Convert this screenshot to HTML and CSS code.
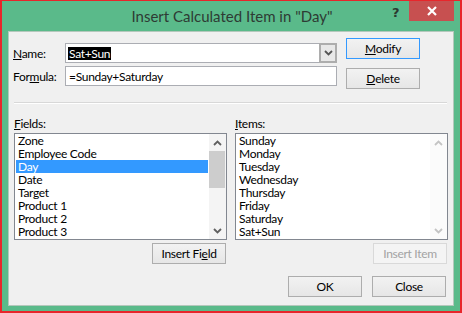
FILE: index.html
```html
<!DOCTYPE html>
<html>
<head>
<meta charset="utf-8">
<link rel="stylesheet" href="styles.css">
</head>
<body>
<div class="window">
  <div class="titlebar">
    <div class="title">Insert Calculated Item in "Day"</div>
    <div class="help">?</div>
    <div class="close"><svg width="12" height="10" viewBox="0 0 12 10"><path d="M2 1 L10 9 M10 1 L2 9" stroke="#fff" stroke-width="2.2" fill="none"/></svg></div>
  </div>
  <div class="panel">
    <div class="top">
      <div class="form">
        <div class="frow name-row">
          <div class="lbl"><u>N</u>ame:</div>
          <div class="combo">
            <div class="combo-text"><span class="hl">Sat+Sun</span></div>
            <div class="drop"><svg width="9" height="6" viewBox="0 0 9 6"><path d="M1 1 L4.5 4.5 L8 1" stroke="#555" stroke-width="1.8" fill="none"/></svg></div>
          </div>
        </div>
        <div class="frow">
          <div class="lbl">For<u>m</u>ula:</div>
          <div class="textbox">=Sunday+Saturday</div>
        </div>
      </div>
      <div class="btns">
        <div class="btn default"><u>M</u>odify</div>
        <div class="btn"><u>D</u>elete</div>
      </div>
    </div>
    <div class="sep"></div>
    <div class="lists">
      <div class="lcol">
        <div class="llabel"><u>F</u>ields:</div>
        <div class="listbox">
          <div class="items">
            <div class="item">Zone</div>
            <div class="item">Employee Code</div>
            <div class="item sel">Day</div>
            <div class="item">Date</div>
            <div class="item">Target</div>
            <div class="item">Product 1</div>
            <div class="item">Product 2</div>
            <div class="item">Product 3</div>
          </div>
          <div class="sbar">
            <div class="arr"><svg width="9" height="6" viewBox="0 0 9 6"><path d="M1 5 L4.5 1.5 L8 5" stroke="#606060" stroke-width="1.8" fill="none"/></svg></div>
            <div class="track"><div class="thumb"></div></div>
            <div class="arr"><svg width="9" height="6" viewBox="0 0 9 6"><path d="M1 1 L4.5 4.5 L8 1" stroke="#606060" stroke-width="1.8" fill="none"/></svg></div>
          </div>
        </div>
        <div class="under"><div class="btn"><span>Insert Fi<u>e</u>ld</span></div></div>
      </div>
      <div class="lcol">
        <div class="llabel"><u>I</u>tems:</div>
        <div class="listbox">
          <div class="items">
            <div class="item">Sunday</div>
            <div class="item">Monday</div>
            <div class="item">Tuesday</div>
            <div class="item">Wednesday</div>
            <div class="item">Thursday</div>
            <div class="item">Friday</div>
            <div class="item">Saturday</div>
            <div class="item">Sat+Sun</div>
          </div>
          <div class="sbar off">
            <div class="arr"><svg width="9" height="6" viewBox="0 0 9 6"><path d="M1 5 L4.5 1.5 L8 5" stroke="#C4C4C4" stroke-width="1.8" fill="none"/></svg></div>
            <div class="track"></div>
            <div class="arr"><svg width="9" height="6" viewBox="0 0 9 6"><path d="M1 1 L4.5 4.5 L8 1" stroke="#C4C4C4" stroke-width="1.8" fill="none"/></svg></div>
          </div>
        </div>
        <div class="under"><div class="btn disabled">Insert Item</div></div>
      </div>
    </div>
    <div class="footer">
      <div class="btn">OK</div>
      <div class="btn">Close</div>
    </div>
  </div>
</div>
</body>
</html>
```

FILE: styles.css
```css
* { box-sizing: border-box; }
html, body { margin: 0; padding: 0; }
body {
  width: 462px; height: 313px; overflow: hidden;
  font-family: "Lato", "Liberation Sans", sans-serif;
  font-size: 12px; color: #000;
  letter-spacing: -0.3px;
}
.window {
  width: 462px; height: 313px;
  background: #5ABA8A;
  border: 2px solid #E8262B;
  border-top-width: 1px;
  display: flex; flex-direction: column;
}
.titlebar {
  position: relative;
  height: 30px;
  flex: none;
}
.title {
  text-align: center;
  font-size: 15px;
  letter-spacing: 0;
  line-height: 30px;
  color: #2E3B34;
  padding-left: 2px;
}
.help {
  position: absolute; left: 390px; top: 4px;
  font-family: "DejaVu Sans", sans-serif;
  font-weight: bold; font-size: 13px; color: #2B3A31;
}
.close {
  position: absolute; right: 6px; top: 0;
  width: 45px; height: 20px;
  background: #C75050;
  display: flex; align-items: center; justify-content: center;
}
.panel {
  margin: 0 6px;
  height: 275px;
  background: #F0F0F0;
  border: 1px solid #B4C8BC;
  padding: 0 0 0 4px;
}
.top { display: flex; }
.form { width: 329px; padding-top: 11px; }
.frow { display: flex; align-items: center; height: 20px; margin-bottom: 3px; }
.lbl { width: 52px; }
.combo {
  width: 272px; height: 20px;
  background: #fff;
  border: 1px solid #ABADB3;
  display: flex;
}
.combo-text { flex: 1; padding: 2px 0 0 2px; }
.hl { background: #000; color: #fff; padding: 0 1px; display: inline-block; line-height: 13px; }
.drop {
  width: 18px; margin: -1px -1px -1px 0;
  border: 2px solid #ADADAD;
  background: #E8E8E8;
  display: flex; align-items: center; justify-content: center;
}
.textbox {
  width: 272px; height: 20px;
  background: #fff;
  border: 1px solid #ABADB3;
  padding: 2px 0 0 3px;
}
.btns { padding: 6px 0 0 4px; display: flex; flex-direction: column; gap: 9px; }
.btn {
  width: 74px; height: 21px;
  border: 1px solid #ADADAD;
  background: linear-gradient(#F2F2F2, #E6E6E6);
  display: flex; align-items: center; justify-content: center;
  padding-bottom: 1px;
}
.btn.default { border-color: #3399FF; }
.btn.disabled { border-color: #D9D9D9; background: #F4F4F4; color: #A3A3A3; }
.sep {
  margin: 13px 6px 0 1px;
  height: 2px;
  border-top: 1px solid #D8D8D8;
  border-bottom: 1px solid #FFFFFF;
}
.lists { display: flex; gap: 8px; padding-left: 1px; margin-top: 13px; }
.lcol { width: 213px; }
.llabel { height: 16px; line-height: 14px; padding-left: 0; }
.listbox {
  height: 107px;
  border: 1px solid #828790;
  background: #fff;
  display: flex;
}
.items { flex: 1; padding: 0 1px; }
.item { height: 13px; line-height: 13px; padding-left: 2px; white-space: nowrap; }
.item.sel { background: #3399FF; color: #fff; }
.sbar { width: 17px; display: flex; flex-direction: column; background: #F4F4F4; }
.sbar.off { background: #FBFBFB; }
.arr { height: 17px; display: flex; align-items: center; justify-content: center; }
.track { flex: 1; }
.thumb { margin: 0 1px 0 0; height: 37px; background: #CDCDCD; }
.under { display: flex; justify-content: flex-end; padding: 3px 1px 0 0; }
.footer { display: flex; justify-content: flex-end; gap: 10px; padding: 12px 7px 0 0; }
u { text-decoration: underline; text-underline-offset: 1px; }
```
